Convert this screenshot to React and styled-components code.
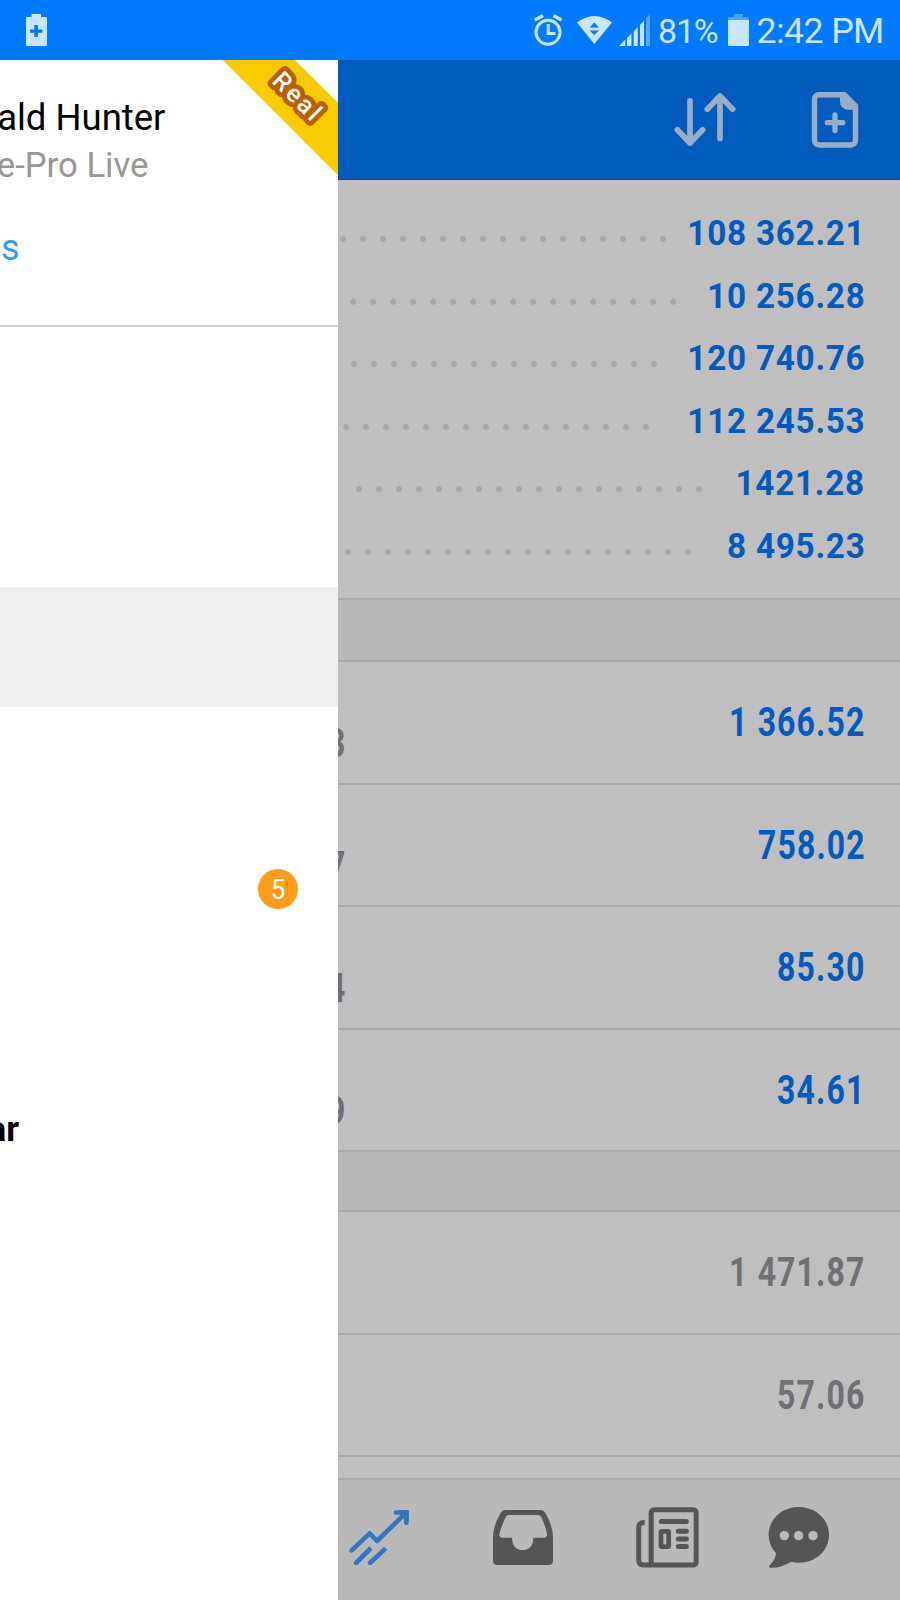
import React from "react";
import styled, { createGlobalStyle } from "styled-components";

const GlobalStyle = createGlobalStyle`
  * {
    box-sizing: border-box;
  }
  body {
    margin: 0;
    font-family: Roboto, "Liberation Sans", sans-serif;
  }
  svg {
    display: block;
    flex: none;
  }
`;

const Screen = styled.div`
  width: 900px;
  height: 1600px;
  display: flex;
  flex-direction: column;
  overflow: hidden;
  background: #fff;
`;

const StatusBar = styled.header`
  height: 60px;
  flex: none;
  display: flex;
  align-items: center;
  padding: 0 17px 0 26px;
  background: #007aff;
  color: #cce4ff;
`;

const StatusInfo = styled.div`
  display: flex;
  align-items: center;
  margin-left: auto;
`;

const StatusText = styled.span`
  width: ${({ width }) => width}px;
  margin-left: ${({ gap }) => gap}px;
  padding-top: 2px;
  font-size: ${({ size }) => size}px;
  line-height: 40px;
  letter-spacing: ${({ spacing }) => spacing}px;
  white-space: nowrap;
`;

const StatusIcon = styled.svg`
  margin-left: ${({ $gap }) => $gap || 0}px;
`;

const Body = styled.div`
  flex: 1;
  display: flex;
  min-height: 0;
`;

const Drawer = styled.aside`
  width: 338px;
  flex: none;
  overflow: hidden;
  background: #fff;
`;

const Profile = styled.div`
  position: relative;
  height: 267px;
  padding-top: 37px;
  border-bottom: 2px solid #d2d2d2;
`;

const ProfileLine = styled.div`
  display: flex;
  justify-content: flex-end;
  width: ${({ right }) => right}px;
  height: 42px;
  margin-top: ${({ top }) => top || 0}px;
  overflow: hidden;
  color: ${({ color }) => color};
  font-size: ${({ size }) => size}px;
  line-height: 42px;
  white-space: nowrap;
`;

const Ribbon = styled.div`
  position: absolute;
  top: 0;
  right: 0;
  width: 116px;
  height: 116px;
  background: #f8cb00;
  clip-path: polygon(0.7px 0, 72.7px 0, 116px 42.7px, 116px 115.3px);
`;

const RibbonText = styled.text`
  fill: #fff;
  stroke: #b96000;
  stroke-width: 9.5px;
  stroke-linejoin: round;
  paint-order: stroke;
  font-size: 25px;
  font-weight: 500;
  text-anchor: middle;
`;

const Menu = styled.div`
  padding-top: 140px;
`;

const MenuItem = styled.div`
  height: 120px;
  display: flex;
  align-items: center;
  justify-content: space-between;
  padding-right: 40px;
  background: ${({ active }) => (active ? "#efefef" : "#fff")};
`;

const MenuLabel = styled.span`
  display: flex;
  justify-content: flex-end;
  width: 19px;
  padding-top: 4px;
  overflow: hidden;
  font-size: 35px;
  font-weight: 700;
`;

const Badge = styled.span`
  width: 40px;
  height: 40px;
  margin-left: auto;
  margin-top: 3px;
  border-radius: 50%;
  background: #ff9c1a;
  color: #fff;
  font-size: 28px;
  line-height: 41px;
  text-align: center;
`;

const Digit = styled.span`
  display: block;
  transform: scaleX(0.92);
`;

const Main = styled.main`
  flex: 1;
  min-width: 0;
  display: flex;
  flex-direction: column;
  overflow: hidden;
  background: #bfbfbf;
`;

const Toolbar = styled.div`
  height: 120px;
  flex: none;
  display: flex;
  align-items: center;
  justify-content: flex-end;
  gap: 74px;
  padding: 1px 41px 0 0;
  background: #005bbf;
  border-bottom: 1px solid #0049a4;
`;

const Summary = styled.section`
  height: 420px;
  flex: none;
  padding-top: 22px;
  border-bottom: 2px solid #a9a9a9;
`;

const SummaryRow = styled.div`
  height: 62.5px;
  display: flex;
  align-items: center;
  justify-content: space-between;
  padding-right: 35px;
`;

const Dots = styled.span`
  width: ${({ count }) => count * 20}px;
  height: 6px;
  flex: none;
  margin-left: ${({ start }) => start}px;
  margin-top: 12px;
  background: radial-gradient(circle at center, #a9a9a9 2.6px, transparent 3.4px)
    0 0 / 20px 6px repeat-x;
`;

const Total = styled.span`
  color: #005bbf;
  font-size: 35.2px;
  font-weight: 700;
  letter-spacing: 0.8px;
  white-space: nowrap;
  transform: scaleX(0.945);
  transform-origin: right center;
`;

const SectionGap = styled.div`
  height: ${({ height }) => height}px;
  flex: none;
  background: #b9b9b9;
  border-bottom: 2px solid #a9a9a9;
`;

const Row = styled.div`
  height: 122.5px;
  flex: none;
  display: flex;
  align-items: center;
  padding-right: 34px;
  border-bottom: 2px solid #a9a9a9;
`;

const Condensed = styled.span`
  color: ${({ muted }) => (muted ? "#6f7073" : "#005bbf")};
  font-size: 40px;
  font-weight: 700;
  line-height: 44px;
  letter-spacing: 1.4px;
  white-space: nowrap;
  transform: scaleX(0.8);
`;

const Price = styled(Condensed)`
  margin-left: -11px;
  padding-top: 44px;
  transform-origin: left center;
`;

const Amount = styled(Condensed)`
  margin-left: auto;
  margin-right: 0.5px;
  padding-top: 2px;
  transform-origin: right center;
`;

const TabBar = styled.nav`
  height: 122px;
  flex: none;
  display: grid;
  grid-template-columns: 143px 145px 131px 64px;
  margin-top: auto;
  padding: 27px 0 0 10px;
  background: #b9b9b9;
  border-top: 2px solid #a9a9a9;
`;

const totals = [
  { value: "108 362.21", count: 17, start: -4.9 },
  { value: "10 256.28", count: 17, start: 4.5 },
  { value: "120 740.76", count: 16, start: 6.4 },
  { value: "112 245.53", count: 16, start: -2.4 },
  { value: "1421.28", count: 18, start: 11.4 },
  { value: "8 495.23", count: 18, start: -0.2 },
];

const positions = [
  { price: "3", profit: "1 366.52" },
  { price: "7", profit: "758.02" },
  { price: "4", profit: "85.30" },
  { price: "9", profit: "34.61" },
];

const orders = ["1 471.87", "57.06"];

const ChargingIcon = () => (
  <svg width="21" height="32" viewBox="0 0 21 32">
    <path
      fill="#cce4ff"
      fillRule="evenodd"
      d="M5.500 0h9.500v3h5a1 1 0 0 1 1 1v26.500a1.500 1.500 0 0 1-1.500 1.500h-18A1.500 1.500 0 0 1 0 30.500V4a1 1 0 0 1 1-1h4.500zM8.300 11v4.500H4v3.300h4.300V23h3.600v-4.200H16.500v-3.300h-4.600V11z"
    />
  </svg>
);

const AlarmIcon = () => (
  <StatusIcon width="29" height="32" viewBox="0 0 29 32" fill="none" stroke="#cce4ff">
    <circle cx="14" cy="18.300" r="12" strokeWidth="3" />
    <path d="M0.800 6.200L9 1.500M27.500 6.200L19.500 1.500" strokeWidth="3.200" />
    <path d="M14.200 10v9.500h7.300" strokeWidth="3" />
  </StatusIcon>
);

const WifiIcon = () => (
  <StatusIcon $gap={14} width="35" height="28" viewBox="0 0 35 28">
    <path
      fill="#cce4ff"
      fillRule="evenodd"
      d="M0 6.500Q17.500-6.500 35 6.500L17.300 28zM12.500 11.500h9.500L17.300 6.500zM12.500 14.500h9.500L17.300 19z"
    />
  </StatusIcon>
);

const SignalIcon = () => (
  <StatusIcon $gap={7} width="31" height="32" viewBox="0 0 31 32" fill="#cce4ff">
    <path d="M0 32L6.300 25.500V32zM8 24l4.500-4.500V32H8zM14.700 17.500l4-4.500V32h-4zM21 11l4-4.500V32h-4z" />
    <path fill="#59a8ff" d="M27 4.500L31 0v32h-4z" />
  </StatusIcon>
);

const BatteryIcon = () => (
  <StatusIcon $gap={9} width="21" height="32" viewBox="0 0 21 32">
    <path fill="#4da2ff" d="M6 0h9v3h5.500v3H0V3h6z" />
    <path fill="#cce4ff" d="M0 6h21v24.500a1.500 1.500 0 0 1-1.500 1.500h-18A1.500 1.500 0 0 1 0 30.500z" />
  </StatusIcon>
);

const SortIcon = () => (
  <svg
    width="64"
    height="58"
    viewBox="673 91 64 58"
    fill="none"
    stroke="#99adc4"
    strokeWidth="5.700"
    strokeLinecap="round"
    strokeLinejoin="round"
  >
    <path d="M690 100.800V143M677.300 129.800L690 143l12.700-13.200" />
    <path d="M720 138.500V96M707.300 109.200L720 96l12.700 13.200" />
  </svg>
);

const NewOrderIcon = () => (
  <svg width="48" height="58" viewBox="811 91 48 58">
    <path
      d="M818.500 94.800h26l11 11.200v34.500a4.500 4.500 0 0 1-4.500 4.500h-32a4.500 4.500 0 0 1-4.500-4.500v-41a4.500 4.500 0 0 1 4.500-4.700z"
      fill="none"
      stroke="#99adc4"
      strokeWidth="5.400"
      strokeLinejoin="round"
    />
    <path d="M840 94h5l11 11v4.800h-8.500q-7.500-1-7.500-8.500z" fill="#99adc4" />
    <path
      d="M835 115v15.500M827.300 122.700h15.500"
      stroke="#99adc4"
      strokeWidth="5.300"
      strokeLinecap="round"
    />
  </svg>
);

const TradeIcon = () => (
  <svg width="64" height="64" viewBox="54 111 192 192" fill="none" stroke="#2f76c4" strokeWidth="14">
    <path d="M65 241L119 190L141 213L226 130" strokeLinecap="round" strokeLinejoin="round" />
    <path d="M198 127.500H229V158" strokeLinecap="round" />
    <path d="M205 120H236V153L221 145L213 135z" fill="#2f76c4" stroke="none" />
    <path d="M78 279L123 234M120 279L167 235" />
    <g fill="#2f76c4" stroke="none">
      <circle cx="78" cy="279" r="7" />
      <circle cx="120" cy="279" r="7" />
    </g>
  </svg>
);

const InboxIcon = () => (
  <svg width="64" height="64" viewBox="483 111 192 192">
    <path
      fill="#555"
      fillRule="evenodd"
      d="M528 120H630Q641 120 646 129Q669 168 669 202V272Q669 285 656 285H502Q489 285 489 272V202Q489 168 512 129Q517 120 528 120ZM537 135Q530 135 527 142Q513 170 508 192Q507 203 517 203H546Q547 240 578 240Q609 240 610 203H641Q652 203 651 192Q646 166 634 142Q631 135 622 135Z"
    />
  </svg>
);

const NewsIcon = () => (
  <svg width="64" height="64" viewBox="108 111 192 192" fill="none" stroke="#555">
    <rect x="153.500" y="119" width="135" height="166" rx="9" strokeWidth="15" />
    <path d="M134 158Q116 156 116 174V270Q116 285 131 285H156" strokeWidth="15" />
    <path d="M184 154.500H259M235 184H259M235 207H259M235 229.500H259" strokeWidth="15" strokeLinecap="round" />
    <rect x="183" y="184" width="23" height="46" rx="2" strokeWidth="14" />
  </svg>
);

const ChatIcon = () => (
  <svg width="64" height="64" viewBox="501 111 192 192">
    <path
      fill="#555"
      d="M596 111C647 111 687 148 687 194C687 242 647 278 596 278Q584 278 573 275Q545 294 511 293Q504 291 510 285Q526 270 528 250Q506 225 506 194C506 148 546 111 596 111Z"
    />
    <g fill="#b9b9b9">
      <circle cx="553" cy="197" r="14" />
      <circle cx="596" cy="197" r="14" />
      <circle cx="639" cy="197" r="14" />
    </g>
  </svg>
);

const App = () => {
  return (
    <Screen>
      <GlobalStyle />
      <StatusBar>
        <ChargingIcon />
        <StatusInfo>
          <AlarmIcon />
          <WifiIcon />
          <SignalIcon />
          <StatusText size={34} gap={8} width={60.5} spacing={-1.2}>
            81%
          </StatusText>
          <BatteryIcon />
          <StatusText size={35.8} gap={8} width={126.5} spacing={-0.65}>
            2:42 PM
          </StatusText>
        </StatusInfo>
      </StatusBar>
      <Body>
        <Drawer>
          <Profile>
            <ProfileLine size={36.5} right={165.5} color="#000">
              ald Hunter
            </ProfileLine>
            <ProfileLine size={34.7} right={148.5} top={5} color="#999694">
              e-Pro Live
            </ProfileLine>
            <ProfileLine size={36} right={19.5} top={40.5} color="#3399ff">
              s
            </ProfileLine>
            <Ribbon>
              <svg width="116" height="116" viewBox="0 0 116 116">
                <RibbonText
                  x="0"
                  y="8.5"
                  letterSpacing="2.6"
                  transform="translate(76 37) rotate(45)"
                >
                  Real
                </RibbonText>
              </svg>
            </Ribbon>
          </Profile>
          <Menu>
            <MenuItem />
            <MenuItem active />
            <MenuItem />
            <MenuItem>
              <Badge>
                <Digit>5</Digit>
              </Badge>
            </MenuItem>
            <MenuItem />
            <MenuItem>
              <MenuLabel>ar</MenuLabel>
            </MenuItem>
          </Menu>
        </Drawer>
        <Main>
          <Toolbar>
            <SortIcon />
            <NewOrderIcon />
          </Toolbar>
          <Summary>
            {totals.map(({ value, count, start }) => (
              <SummaryRow key={value}>
                <Dots count={count} start={start} />
                <Total>{value}</Total>
              </SummaryRow>
            ))}
          </Summary>
          <SectionGap height={62} />
          {positions.map(({ price, profit }) => (
            <Row key={profit}>
              <Price muted>{price}</Price>
              <Amount>{profit}</Amount>
            </Row>
          ))}
          <SectionGap height={60} />
          {orders.map((value) => (
            <Row key={value}>
              <Amount muted>{value}</Amount>
            </Row>
          ))}
          <TabBar>
            <TradeIcon />
            <InboxIcon />
            <NewsIcon />
            <ChatIcon />
          </TabBar>
        </Main>
      </Body>
    </Screen>
  );
};

export default App;
